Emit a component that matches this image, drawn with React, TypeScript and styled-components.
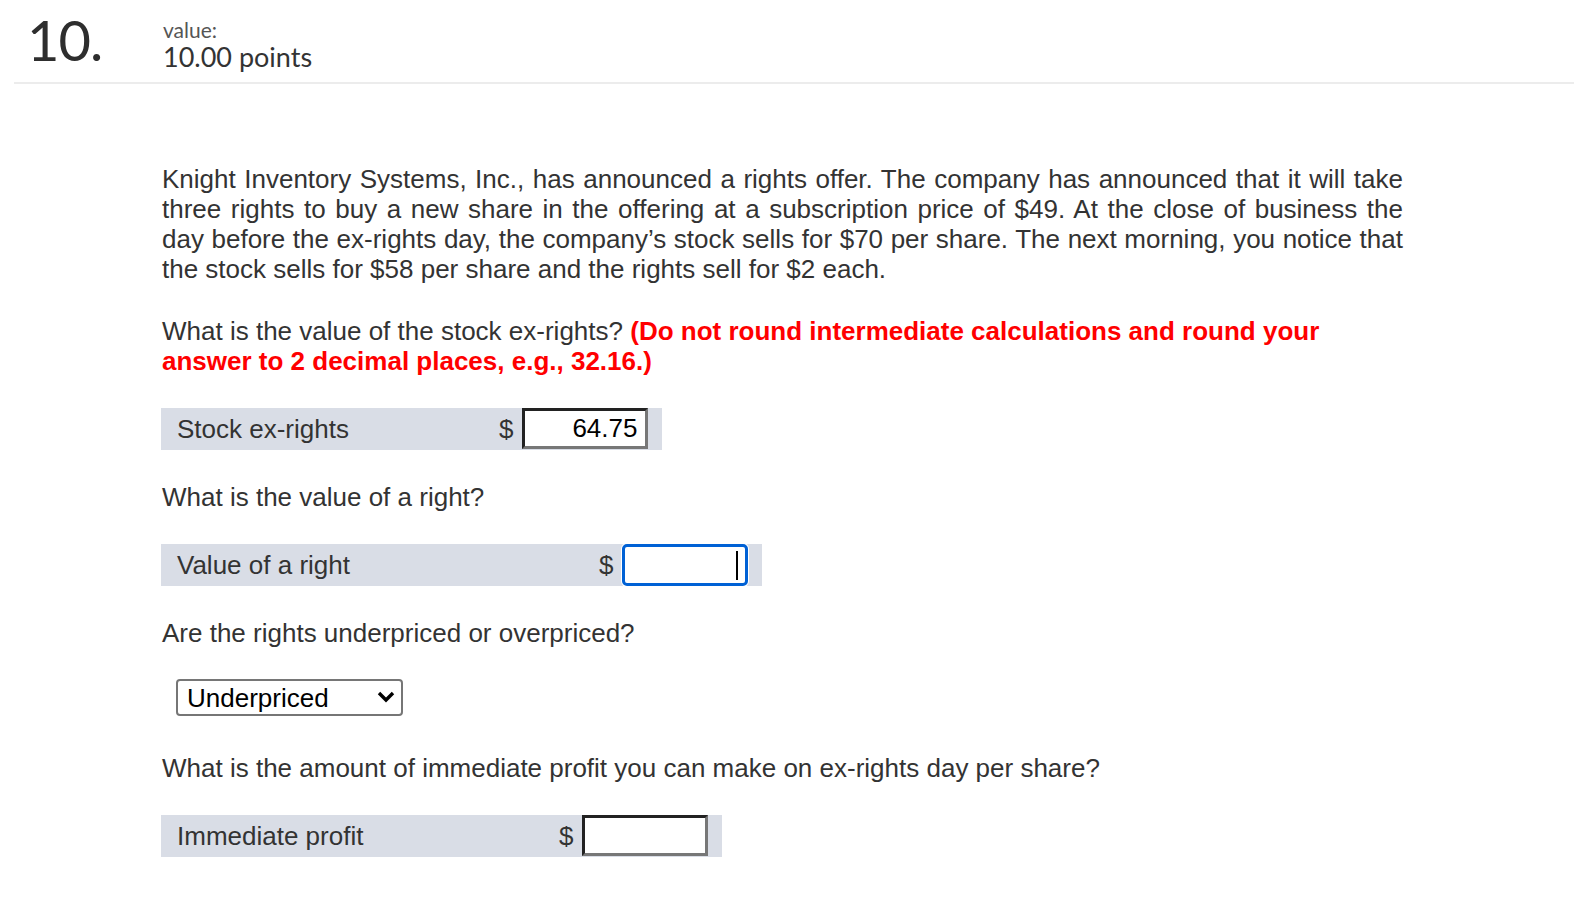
import React from 'react';
import styled, { createGlobalStyle } from 'styled-components';

const GlobalStyle = createGlobalStyle`
  body {
    margin: 0;
    background: #fff;
    font-family: "Liberation Sans", Arial, sans-serif;
    color: #333;
  }
`;

const Page = styled.div`
  width: 1574px;
  min-height: 916px;
`;

const Header = styled.header`
  display: flex;
  align-items: flex-start;
  margin: 0 0 0 14px;
  padding: 9px 0 10px 13px;
  border-bottom: 2px solid #ececec;
  font-family: Lato, "Open Sans", sans-serif;
`;

const Number = styled.div`
  width: 136px;
  font-size: 56px;
  line-height: 62px;
  color: #2e2e2e;
  letter-spacing: -1px;
`;

const Points = styled.div`
  display: flex;
  flex-direction: column;
  padding-top: 9px;
`;

const ValueLabel = styled.span`
  font-size: 21px;
  line-height: 24px;
  color: #555;
`;

const ValuePoints = styled.span`
  font-size: 27px;
  line-height: 30px;
  color: #333;
`;

const Content = styled.main`
  display: flex;
  flex-direction: column;
  align-items: flex-start;
  gap: 31px;
  width: 1241px;
  margin: 80px 0 0 162px;
`;

const Paragraph = styled.p<{ $justify?: boolean }>`
  margin: 0;
  width: 100%;
  font-size: 26px;
  line-height: 30px;
  text-align: ${(p) => (p.$justify ? 'justify' : 'left')};
  color: #333;
  &:first-child {
    margin-bottom: 1px;
  }
`;

const Hint = styled.strong`
  color: #f00;
`;

const AnswerRow = styled.div<{ $labelWidth: number }>`
  display: grid;
  grid-template-columns: ${(p) => p.$labelWidth}px auto 126px;
  align-items: center;
  height: 42px;
  margin: 1px 0 1px -1px;
  padding-right: 14px;
  background: #d9dde6;
  font-size: 26px;
`;

const RowLabel = styled.span`
  padding-left: 16px;
  color: #333;
`;

const Dollar = styled.span`
  padding: 0 9px 0 5px;
  color: #333;
`;

const InputWrap = styled.div`
  position: relative;
  height: 42px;
`;

const AmountInput = styled.input<{ $focused?: boolean }>`
  box-sizing: border-box;
  width: 126px;
  height: ${(p) => (p.$focused ? '42px' : '41px')};
  margin: 0;
  padding: 0 8px;
  font-family: "Liberation Sans", Arial, sans-serif;
  font-size: 26px;
  text-align: right;
  color: #000;
  background: #fff;
  outline: none;
  border-style: solid;
  border-width: 3px;
  border-color: #222 #777 #777 #222;
  border-radius: 0;
  ${(p) =>
    p.$focused &&
    `
    border-color: #0061d5;
    border-radius: 5px;
    box-shadow: 0 0 0 1px #fff;
  `}
`;

const Caret = styled.span`
  position: absolute;
  right: 10px;
  top: 7px;
  width: 2px;
  height: 29px;
  background: #000;
`;

const SelectWrap = styled.div`
  position: relative;
  margin: 0 0 6px 14px;
`;

const Select = styled.select`
  box-sizing: border-box;
  appearance: none;
  width: 227px;
  height: 37px;
  padding: 0 30px 0 9px;
  font-family: "Liberation Sans", Arial, sans-serif;
  font-size: 26px;
  color: #000;
  background: #fff;
  border: 2px solid #767676;
  border-radius: 4px;
`;

const Chevron = styled.svg`
  position: absolute;
  right: 8px;
  top: 11px;
  pointer-events: none;
`;

type RowProps = { label: string; labelWidth: number; value?: string; focused?: boolean };

const Answer = ({ label, labelWidth, value = '', focused }: RowProps) => (
  <AnswerRow $labelWidth={labelWidth}>
    <RowLabel>{label}</RowLabel>
    <Dollar>$</Dollar>
    <InputWrap>
      <AmountInput $focused={focused} defaultValue={value} readOnly />
      {focused && <Caret />}
    </InputWrap>
  </AnswerRow>
);

export default function App() {
  return (
    <Page>
      <GlobalStyle />
      <Header>
        <Number>10.</Number>
        <Points>
          <ValueLabel>value:</ValueLabel>
          <ValuePoints>10.00 points</ValuePoints>
        </Points>
      </Header>
      <Content>
        <Paragraph $justify>
          Knight Inventory Systems, Inc., has announced a rights offer. The company has announced that it will take
          three rights to buy a new share in the offering at a subscription price of $49. At the close of business the
          day before the ex-rights day, the company’s stock sells for $70 per share. The next morning, you notice that
          the stock sells for $58 per share and the rights sell for $2 each.
        </Paragraph>
        <Paragraph>
          What is the value of the stock ex-rights?{' '}
          <Hint>
            (Do not round intermediate calculations and round your
            <br />
            answer to 2 decimal places, e.g., 32.16.)
          </Hint>
        </Paragraph>
        <Answer label="Stock ex-rights" labelWidth={333} value="64.75" />
        <Paragraph>What is the value of a right?</Paragraph>
        <Answer label="Value of a right" labelWidth={433} focused />
        <Paragraph>Are the rights underpriced or overpriced?</Paragraph>
        <SelectWrap>
          <Select defaultValue="Underpriced">
            <option>Underpriced</option>
            <option>Overpriced</option>
          </Select>
          <Chevron width="18" height="14" viewBox="0 0 18 14">
            <path d="M2 3 L9 10 L16 3" fill="none" stroke="#000" strokeWidth="3.4" />
          </Chevron>
        </SelectWrap>
        <Paragraph>What is the amount of immediate profit you can make on ex-rights day per share?</Paragraph>
        <Answer label="Immediate profit" labelWidth={393} />
      </Content>
    </Page>
  );
}
